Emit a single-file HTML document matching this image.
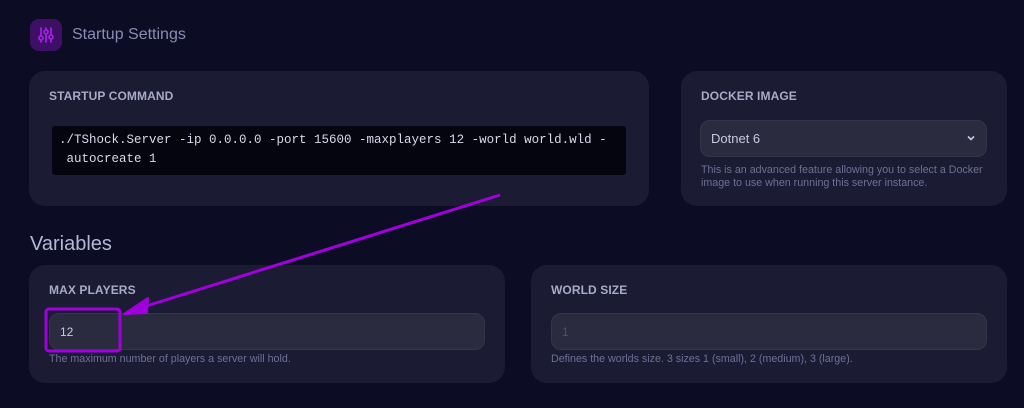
<!DOCTYPE html>
<html><head><meta charset="utf-8"><style>
*{box-sizing:border-box;margin:0;padding:0}
body{width:1024px;height:408px;background:#0c0d24;font-family:"Liberation Sans",sans-serif;position:relative;overflow:hidden}
.abs{position:absolute}
.card{position:absolute;background:#1b1c34;border-radius:16px}
.lbl{position:absolute;font-size:12px;font-weight:bold;color:#a9aac8;letter-spacing:0.1px}
.inp{position:absolute;background:#2a2b3f;border:1px solid #34354a;border-radius:10px;font-size:12px;color:#c8c9e0;padding-left:10px;display:flex;align-items:center}
.help{position:absolute;font-size:10.7px;color:#6e6f95;line-height:13px}
</style></head><body>
<div class="abs" style="left:30px;top:19px;width:32px;height:32px;background:#3d1065;border-radius:9px"></div>
<svg class="abs" style="left:30px;top:19px" width="32" height="32" viewBox="0 0 32 32" fill="none" stroke="#a020e0" stroke-width="1.8" stroke-linecap="round">
<line x1="11" y1="9" x2="11" y2="23"/><line x1="16" y1="9" x2="16" y2="23"/><line x1="21" y1="9" x2="21" y2="23"/>
<circle cx="11" cy="19" r="2" fill="#3d1065"/><circle cx="16" cy="13" r="2" fill="#3d1065"/><circle cx="21" cy="18" r="2" fill="#3d1065"/>
</svg>
<div class="abs" style="left:72px;top:26px;font-size:16px;color:#8b8cb3">Startup Settings</div>

<div class="card" style="left:29px;top:71px;width:620px;height:135px"></div>
<div class="lbl" style="left:49px;top:89px">STARTUP COMMAND</div>
<div class="abs" style="left:52px;top:126px;width:574px;height:49px;background:#05050f;border-radius:3px;font-family:'Liberation Mono',monospace;font-size:12.5px;color:#d8d9ea;padding:5px 0 0 7px;line-height:19px">./TShock.Server -ip 0.0.0.0 -port 15600 -maxplayers 12 -world world.wld -<br>&nbsp;autocreate 1</div>

<div class="card" style="left:681px;top:71px;width:326px;height:135px"></div>
<div class="lbl" style="left:701px;top:89px">DOCKER IMAGE</div>
<div class="inp" style="left:700px;top:120px;width:287px;height:37px;font-size:13px">Dotnet 6</div>
<svg class="abs" style="left:966px;top:134px" width="10" height="8" viewBox="0 0 10 8"><path d="M2 2.5L5 5.5L8 2.5" stroke="#c8c9e0" stroke-width="1.6" fill="none"/></svg>
<div class="help" style="left:701px;top:164px;width:300px">This is an advanced feature allowing you to select a Docker image to use when running this server instance.</div>

<div class="abs" style="left:30px;top:233px;font-size:20px;color:#b6b7d6">Variables</div>

<div class="card" style="left:29px;top:265px;width:476px;height:118px"></div>
<div class="lbl" style="left:49px;top:283px">MAX PLAYERS</div>
<div class="inp" style="left:49px;top:313px;width:436px;height:37px">12</div>
<div class="help" style="left:49px;top:353px">The maximum number of players a server will hold.</div>

<div class="card" style="left:531px;top:265px;width:476px;height:118px"></div>
<div class="lbl" style="left:551px;top:283px">WORLD SIZE</div>
<div class="inp" style="left:551px;top:313px;width:436px;height:37px;color:#4e4f68">1</div>
<div class="help" style="left:551px;top:353px">Defines the worlds size. 3 sizes 1 (small), 2 (medium), 3 (large).</div>

<svg class="abs" style="left:0;top:0" width="1024" height="408">
<rect x="46" y="309" width="74" height="42" rx="3" fill="none" stroke="#a100dc" stroke-width="3"/>
<line x1="500" y1="195" x2="140" y2="308" stroke="#a100dc" stroke-width="3"/>
<path d="M124 314 L148 298 L147 313 Z" fill="#a100dc" stroke="#a100dc" stroke-width="2" stroke-linejoin="round"/>
</svg>
</body></html>
